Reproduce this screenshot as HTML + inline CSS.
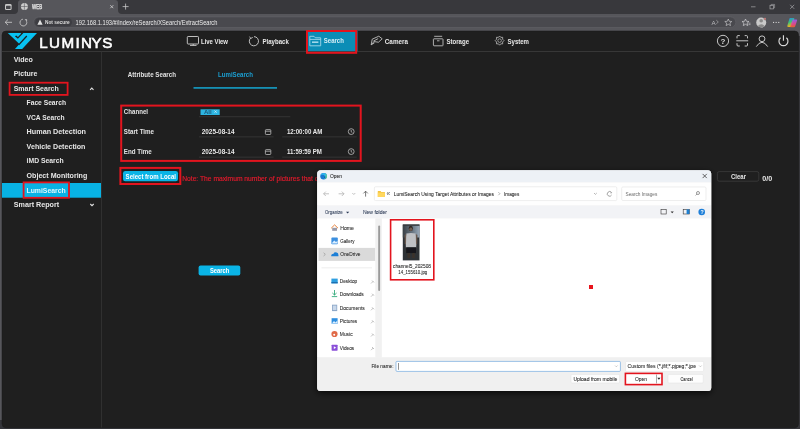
<!DOCTYPE html>
<html><head><meta charset="utf-8">
<style>
html,body{margin:0;padding:0;width:800px;height:429px;overflow:hidden;background:#56565b;}
svg{display:block;font-family:"Liberation Sans",sans-serif;}
.b{font-weight:bold;} svg{will-change:transform}
</style></head>
<body>
<svg width="800" height="429" viewBox="0 0 800 429">
<!-- ===== Browser chrome ===== -->
<rect x="0" y="0" width="800" height="429" fill="#56565b"/>
<rect x="0" y="0" width="800" height="14" fill="#38383c"/>
<!-- active tab -->
<path d="M14,14 Q18,14 18,10 L18,3 Q18,0 21,0 L115,0 Q118,0 118,3 L118,10 Q118,14 122,14 Z" fill="#56565b"/>
<!-- tab actions icon -->
<rect x="5" y="4" width="6.6" height="6" rx="1.3" fill="#c8c8c8"/>
<rect x="6" y="5.8" width="4.6" height="3.3" rx="0.6" fill="#45454a"/>
<!-- globe -->
<circle cx="24.4" cy="6.5" r="3.5" fill="#cdcdcd"/>
<path d="M24.4,3.2 V9.8 M21,6.5 H27.8" stroke="#5a5a5f" stroke-width="0.6"/>
<text x="32" y="8.7" font-size="6.3" fill="#eeeeee" stroke="#eeeeee" stroke-width="0.25" textLength="10.2" lengthAdjust="spacingAndGlyphs">WEB</text>
<!-- tab close -->
<path d="M110.3,5.2 L113.3,8.2 M113.3,5.2 L110.3,8.2" stroke="#d0d0d0" stroke-width="0.8"/>
<!-- new tab + -->
<path d="M125.6,3.6 V9.6 M122.6,6.6 H128.6" stroke="#c8c8c8" stroke-width="0.8"/>
<!-- window controls -->
<line x1="751" y1="6.8" x2="755.5" y2="6.8" stroke="#a8a8ab" stroke-width="0.7"/>
<rect x="770" y="5.3" width="3.6" height="3.6" fill="none" stroke="#a8a8ab" stroke-width="0.7"/>
<path d="M771.2,5.3 V4.4 H774.6 V7.8 H773.6" fill="none" stroke="#a8a8ab" stroke-width="0.6"/>
<path d="M790.2,4.8 L794.2,8.8 M794.2,4.8 L790.2,8.8" stroke="#a8a8ab" stroke-width="0.7"/>
<!-- back / reload -->
<path d="M12,22.3 H5.2 M8,19.5 L5.2,22.3 L8,25.1" fill="none" stroke="#cfcfcf" stroke-width="0.8"/>
<path d="M26.5,21.2 A3.4,3.4 0 1 1 22.9,19.2" fill="none" stroke="#cfcfcf" stroke-width="0.8"/>
<path d="M25.2,19.5 L26.7,19.5 L26.7,21 Z" fill="#cfcfcf" stroke="#cfcfcf" stroke-width="0.5"/>
<!-- address pill -->
<rect x="33.6" y="16.9" width="702.2" height="10.6" rx="5.3" fill="#49494e" stroke="#626267" stroke-width="0.6"/>
<rect x="35.2" y="18" width="36.8" height="8.6" rx="4.3" fill="#3d3d42"/>
<path d="M40,19.6 L42.6,24.8 L37.4,24.8 Z" fill="#e0e0e0"/>
<text x="45" y="24.3" font-size="5.6" class="b" fill="#dedede" textLength="24.7" lengthAdjust="spacingAndGlyphs">Not secure</text>
<text x="75.6" y="24.8" font-size="6.7" fill="#ececec" textLength="141.8" lengthAdjust="spacingAndGlyphs">192.168.1.193/#/index/reSearch/XSearch/ExtractSearch</text>
<!-- read aloud & star -->
<text x="711.5" y="25" font-size="6.2" fill="#b8b8bb">A</text>
<path d="M716.3,20.2 L718.3,22 L716.3,23.8" fill="none" stroke="#b8b8bb" stroke-width="0.6"/>
<path d="M728.3,19 L729.3,21.3 L731.8,21.5 L729.9,23.1 L730.5,25.6 L728.3,24.3 L726.1,25.6 L726.7,23.1 L724.8,21.5 L727.3,21.3 Z" fill="none" stroke="#c0c0c3" stroke-width="0.7"/>
<!-- favorites -->
<path d="M745.5,19 L746.5,21.3 L749,21.5 L747.1,23.1 L747.7,25.6 L745.5,24.3 L743.3,25.6 L743.9,23.1 L742,21.5 L744.5,21.3 Z" fill="none" stroke="#d0d0d3" stroke-width="0.7"/>
<path d="M748.5,23.2 H750.5 M748.5,24.6 H750.5" stroke="#d0d0d3" stroke-width="0.6"/>
<!-- profile -->
<circle cx="761.2" cy="22.5" r="5" fill="#c9c9c9"/>
<circle cx="761.2" cy="20.8" r="1.8" fill="#8a8a8a"/>
<path d="M757.6,26.2 Q761.2,22.3 764.8,26.2 Q761.2,28 757.6,26.2 Z" fill="#8a8a8a"/>
<circle cx="765" cy="18.9" r="1.1" fill="#ee8a86" stroke="#56565b" stroke-width="0.4"/>
<!-- dots -->
<rect x="773" y="21.9" width="1.1" height="1.1" fill="#d4d4d4"/><rect x="775.6" y="21.9" width="1.1" height="1.1" fill="#d4d4d4"/><rect x="778.2" y="21.9" width="1.1" height="1.1" fill="#d4d4d4"/>
<!-- copilot -->
<defs>
<linearGradient id="cpl" x1="0" y1="0" x2="0.3" y2="1"><stop offset="0" stop-color="#2f7ef2"/><stop offset="0.5" stop-color="#35c27a"/><stop offset="1" stop-color="#f6b21c"/></linearGradient>
<linearGradient id="cpr" x1="0" y1="0" x2="0" y2="1"><stop offset="0" stop-color="#8a62f2"/><stop offset="0.55" stop-color="#e2479a"/><stop offset="1" stop-color="#f2622a"/></linearGradient>
</defs>
<path d="M790.2,18 L793.6,18 Q794.6,18 794.3,19.2 L791.6,26 Q791.2,26.9 790.2,26.9 L788,26.9 Q787,26.9 787.3,25.8 L789.3,18.9 Q789.5,18 790.2,18 Z" fill="url(#cpl)"/>
<path d="M793.2,19.4 L796.3,19.4 Q797.4,19.4 797.1,20.5 L795.1,26.4 Q794.8,27.2 794,27.2 L790.8,27.2 Q789.9,27.2 790.3,26.2 L792.4,20.2 Q792.6,19.4 793.2,19.4 Z" fill="url(#cpr)" opacity="0.92"/>

<!-- ===== Page ===== -->
<rect x="0" y="420" width="800" height="9" fill="#34353a"/>
<rect x="796" y="36" width="4" height="393" fill="#37373b"/>
<rect x="2" y="31" width="796.6" height="396.7" rx="4" fill="#1f1f1f" stroke="#1a1a1a" stroke-width="0.5"/>
<!-- header border -->
<rect x="2" y="51" width="796.6" height="0.9" fill="#3a3a3a"/>
<!-- sidebar border -->
<rect x="101" y="51.5" width="0.9" height="376" fill="#333333"/>

<!-- logo -->
<path d="M7.8,33 L37,33 L22.2,49 L15,49 L19.4,44 Z" fill="#08c2f2"/>
<path d="M20.6,33 L23.4,33 L17.9,38.8 L14.9,36.2 L16.3,35.6 L17.9,37 L21.3,33.6 Z" fill="#1f1f1f"/>
<path d="M26.8,36 L18.7,44.9" fill="none" stroke="#1f1f1f" stroke-width="1.3"/>
<text x="39.2 49 61.4 75.6 80.9 91.6 102.2" y="47.7" font-size="15.2" fill="#ffffff" stroke="#ffffff" stroke-width="0.6">LUMINYS</text>

<!-- nav: Live View -->
<rect x="187.3" y="36.5" width="11.2" height="7.5" rx="0.8" fill="none" stroke="#d0d0d0" stroke-width="0.9"/>
<path d="M190,45.4 H196.5 M193.2,44 V45.4" stroke="#d0d0d0" stroke-width="0.9"/>
<text x="201" y="43.5" font-size="6.6" class="b" fill="#e8e8e8" textLength="27" lengthAdjust="spacingAndGlyphs">Live View</text>
<!-- Playback -->
<path d="M250.6,38 A4.6,4.6 0 1 0 254,36.6" fill="none" stroke="#d0d0d0" stroke-width="0.9"/>
<path d="M249.5,36.6 L250.8,38.4 L252.8,37.4" fill="none" stroke="#d0d0d0" stroke-width="0.8"/>
<text x="262.5" y="43.5" font-size="6.6" class="b" fill="#e8e8e8" textLength="26.3" lengthAdjust="spacingAndGlyphs">Playback</text>
<!-- Search (active) -->
<rect x="307" y="31" width="50.5" height="20.2" fill="#0b8db6"/>
<rect x="307" y="31" width="49.2" height="21.8" fill="none" stroke="#e3141e" stroke-width="2"/>
<path d="M309.8,45.8 V36.3 H314 L315.3,37.8 H320.7 V45.8 Z M309.8,39.4 H320.7" fill="none" stroke="#9fd7ea" stroke-width="0.9"/>
<rect x="312" y="41.4" width="6.4" height="1.6" fill="#9fd7ea"/>
<text x="323.8" y="43.4" font-size="6.6" class="b" fill="#d6eef6" textLength="20" lengthAdjust="spacingAndGlyphs">Search</text>
<!-- Camera -->
<path d="M371.2,44.8 L372.2,39.2 L378.8,36.2 L382.2,38.8 L378.5,42.2 L374,41.6 Z M373.3,41.2 L378.2,38.6 M374.5,42.8 L371.2,44.8" fill="none" stroke="#bdbdbd" stroke-width="0.9"/>
<text x="384.8" y="43.5" font-size="6.6" class="b" fill="#e8e8e8" textLength="23.2" lengthAdjust="spacingAndGlyphs">Camera</text>
<!-- Storage -->
<rect x="433.4" y="38.8" width="9.6" height="7" rx="0.6" fill="none" stroke="#bdbdbd" stroke-width="0.9"/>
<path d="M434.2,36.3 H442.2 M437,40.8 H439.5" stroke="#bdbdbd" stroke-width="0.9"/>
<text x="446.5" y="43.5" font-size="6.6" class="b" fill="#e8e8e8" textLength="22.5" lengthAdjust="spacingAndGlyphs">Storage</text>
<!-- System gear -->
<path d="M499.6,36 L500.8,37.4 L502.7,37.3 L502.6,39.2 L504,40.6 L502.6,42 L502.7,43.9 L500.8,43.8 L499.6,45.2 L498.4,43.8 L496.5,43.9 L496.6,42 L495.2,40.6 L496.6,39.2 L496.5,37.3 L498.4,37.4 Z" fill="none" stroke="#bdbdbd" stroke-width="0.8"/>
<circle cx="499.6" cy="40.6" r="1.8" fill="none" stroke="#bdbdbd" stroke-width="0.7"/>
<text x="507.5" y="43.5" font-size="6.6" class="b" fill="#e8e8e8" textLength="21.5" lengthAdjust="spacingAndGlyphs">System</text>
<!-- right icons -->
<circle cx="723" cy="40.9" r="5.6" fill="none" stroke="#d8d8d8" stroke-width="0.9"/>
<text x="720.4" y="43.8" font-size="8" class="b" fill="#d8d8d8">?</text>
<path d="M737,38.4 V36.6 Q737,35.6 738,35.6 H739.8 M744.7,35.6 H746.5 Q747.5,35.6 747.5,36.6 V38.4 M747.5,43.2 V45 Q747.5,46 746.5,46 H744.7 M739.8,46 H738 Q737,46 737,45 V43.2 M736.3,40.8 H748.2" fill="none" stroke="#d8d8d8" stroke-width="0.9"/>
<circle cx="762" cy="38.8" r="2.9" fill="none" stroke="#d8d8d8" stroke-width="0.9"/>
<path d="M756.3,46.6 Q759,42.3 762,42.3 Q765,42.3 767.7,46.6" fill="none" stroke="#d8d8d8" stroke-width="0.9"/>
<path d="M780.5,37.8 A4.5,4.5 0 1 0 786.4,37.8 M783.45,35.2 V40.8" fill="none" stroke="#dadada" stroke-width="1.15"/>

<!-- ===== sidebar ===== -->
<g class="b" fill="#e6e6e6" font-size="7.4">
<text x="13.7" y="61.5" textLength="19.2" lengthAdjust="spacingAndGlyphs">Video</text>
<text x="13.7" y="76.3" textLength="23.8" lengthAdjust="spacingAndGlyphs">Picture</text>
<text x="13.7" y="90.6" textLength="45.1" lengthAdjust="spacingAndGlyphs">Smart Search</text>
<text x="26.6" y="105.3" textLength="39.4" lengthAdjust="spacingAndGlyphs">Face Search</text>
<text x="26.6" y="119.8" textLength="38" lengthAdjust="spacingAndGlyphs">VCA Search</text>
<text x="26.6" y="134.2" textLength="59.4" lengthAdjust="spacingAndGlyphs">Human Detection</text>
<text x="26.6" y="148.8" textLength="58.8" lengthAdjust="spacingAndGlyphs">Vehicle Detection</text>
<text x="26.6" y="163.3" textLength="37" lengthAdjust="spacingAndGlyphs">iMD Search</text>
<text x="26.6" y="177.9" textLength="60.7" lengthAdjust="spacingAndGlyphs">Object Monitoring</text>
</g>
<rect x="9.6" y="82.7" width="58" height="12.2" fill="none" stroke="#e3141e" stroke-width="1.8"/>
<path d="M90.1,89.8 L91.8,88.1 L93.5,89.8" fill="none" stroke="#e0e0e0" stroke-width="1.1"/>
<rect x="2" y="183" width="99" height="14.7" fill="#08b2e4"/>
<rect x="23.6" y="182.4" width="45.4" height="15.4" fill="none" stroke="#e3141e" stroke-width="1.8"/>
<text x="26.5" y="192.5" font-size="7.4" class="b" fill="#dff6fd" textLength="39.2" lengthAdjust="spacingAndGlyphs">LumiSearch</text>
<text x="13.75" y="207" font-size="7.4" class="b" fill="#e6e6e6" textLength="45.4" lengthAdjust="spacingAndGlyphs">Smart Report</text>
<path d="M90.3,204 L92,205.7 L93.7,204" fill="none" stroke="#e0e0e0" stroke-width="1.1"/>

<!-- ===== content ===== -->
<text x="127.8" y="76.5" font-size="6.8" class="b" fill="#e0e0e0" textLength="48.2" lengthAdjust="spacingAndGlyphs">Attribute Search</text>
<text x="218" y="76.5" font-size="6.8" class="b" fill="#1b9fd2" textLength="35" lengthAdjust="spacingAndGlyphs">LumiSearch</text>
<rect x="193.5" y="87" width="83.5" height="1.8" fill="#1690b4"/>

<!-- form red box -->
<rect x="121.2" y="105.6" width="239.5" height="55.3" fill="none" stroke="#e3141e" stroke-width="2"/>
<g class="b" fill="#e4e4e4" font-size="6.9">
<text x="123.8" y="114" textLength="24.2" lengthAdjust="spacingAndGlyphs">Channel</text>
<text x="123.8" y="134.2" textLength="30.2" lengthAdjust="spacingAndGlyphs">Start Time</text>
<text x="123.8" y="154.2" textLength="27.8" lengthAdjust="spacingAndGlyphs">End Time</text>
</g>
<rect x="200.5" y="109.3" width="19.2" height="5.7" fill="#2db5e2"/>
<text x="203.9" y="114.3" font-size="5.8" class="b" fill="#1d5878" textLength="7.8" lengthAdjust="spacingAndGlyphs">All</text>
<path d="M214.4,110.4 L216.8,112.8 M216.8,110.4 L214.4,112.8" stroke="#e8f6fc" stroke-width="0.6"/>
<rect x="199" y="116.4" width="91.3" height="0.8" fill="#3a3a3a"/>
<g class="b" fill="#e8e8e8" font-size="6.6">
<text x="201.7" y="134" textLength="32.8" lengthAdjust="spacingAndGlyphs">2025-08-14</text>
<text x="201.7" y="154" textLength="32.8" lengthAdjust="spacingAndGlyphs">2025-08-14</text>
<text x="286.9" y="134" textLength="35.4" lengthAdjust="spacingAndGlyphs">12:00:00 AM</text>
<text x="286.9" y="154" textLength="35" lengthAdjust="spacingAndGlyphs">11:59:59 PM</text>
</g>
<g fill="none" stroke="#bdbdbd" stroke-width="0.8">
<rect x="265.4" y="129.6" width="5.4" height="4.9" rx="0.8"/>
<rect x="265.4" y="149.6" width="5.4" height="4.9" rx="0.8"/>
<circle cx="351.2" cy="131.6" r="2.9"/>
<circle cx="351.2" cy="151.6" r="2.9"/>
<path d="M351.2,130 V131.8 L352.3,132.5 M351.2,150 V151.8 L352.3,152.5"/>
</g>
<path d="M265.4,131.2 H270.8 M265.4,151.2 H270.8" stroke="#bdbdbd" stroke-width="0.8"/>
<g fill="#3a3a3a">
<rect x="199" y="136.5" width="74.6" height="0.8"/>
<rect x="282.2" y="136.5" width="74.5" height="0.8"/>
<rect x="199" y="156.7" width="74.6" height="0.8"/>
<rect x="282.2" y="156.7" width="74.5" height="0.8"/>
</g>

<!-- select from local -->
<rect x="120.4" y="167.9" width="59.9" height="16.1" fill="none" stroke="#e3141e" stroke-width="2"/>
<rect x="123" y="171" width="55" height="10.3" rx="2.2" fill="#0ab4e6"/>
<text x="125.6" y="178.6" font-size="6.9" class="b" fill="#ffffff" textLength="50.4" lengthAdjust="spacingAndGlyphs">Select from Local</text>
<text x="182.2" y="180.7" font-size="6.6" fill="#e01a2c" stroke="#e01a2c" stroke-width="0.18" textLength="136" lengthAdjust="spacingAndGlyphs">Note: The maximum number of pictures that c</text>

<!-- Search button -->
<rect x="198.6" y="265.5" width="41.7" height="10.1" rx="2" fill="#0ab4e6"/>
<text x="209.9" y="272.6" font-size="6.6" class="b" fill="#ffffff" textLength="19.5" lengthAdjust="spacingAndGlyphs">Search</text>

<!-- Clear & 0/0 -->
<rect x="717.4" y="171.6" width="41.4" height="9.6" rx="1.8" fill="none" stroke="#3c3c3c" stroke-width="0.8"/>
<text x="731" y="178.8" font-size="6.3" class="b" fill="#e6e6e6" textLength="15" lengthAdjust="spacingAndGlyphs">Clear</text>
<text x="762.3" y="180.6" font-size="6.3" class="b" fill="#e6e6e6" textLength="10" lengthAdjust="spacingAndGlyphs">0/0</text>


<!-- ===== Open dialog ===== -->
<defs>
<filter id="sh" x="-5%" y="-10%" width="110%" height="125%">
<feGaussianBlur in="SourceAlpha" stdDeviation="3.2"/>
<feOffset dy="1.5"/>
<feComponentTransfer><feFuncA type="linear" slope="0.75"/></feComponentTransfer>
<feMerge><feMergeNode/><feMergeNode in="SourceGraphic"/></feMerge>
</filter>
<clipPath id="dclip"><rect x="317.2" y="170.2" width="394" height="220.8" rx="3.5"/></clipPath>
</defs>
<rect x="317.2" y="170.2" width="394" height="220.8" rx="3.5" fill="#f0f0f0" filter="url(#sh)"/>
<g clip-path="url(#dclip)">
<!-- title bar -->
<rect x="317" y="170" width="395" height="12.4" fill="#edf1f6"/>
<!-- nav row -->
<rect x="317" y="182.4" width="395" height="23.2" fill="#fefefe"/>
<!-- command bar -->
<rect x="317" y="205.6" width="395" height="12.8" fill="#f2f3f6"/>
<!-- body -->
<rect x="317" y="218.4" width="395" height="139" fill="#ffffff"/>
<rect x="375.3" y="218.4" width="6.5" height="139" fill="#f1f1f1"/>
<rect x="378.2" y="225.5" width="1.9" height="65.5" rx="0.9" fill="#9a9a9a"/>
<!-- bottom -->
<rect x="317" y="357.4" width="395" height="34" fill="#f0f0f0"/>
</g>
<!-- edge icon -->
<circle cx="323.6" cy="176.2" r="3.3" fill="#1878d0"/>
<path d="M320.4,175.4 Q321.2,172.9 323.8,172.9 Q326.8,173 326.9,176 Q326.9,177.8 325.3,178.4 Q323.6,178.6 323.6,177.2 Q323.8,176.2 324.8,176 Q324,174.6 322.6,174.8 Q321.2,175 320.4,175.4 Z" fill="#2fb7ee"/>
<path d="M325.6,173.6 Q327.2,175.2 326.6,177.4 Q326,178.6 325,178.6 Q326.2,177.2 325.6,173.6 Z" fill="#6fd46a"/>
<circle cx="324.6" cy="177.1" r="0.9" fill="#0d5aa8"/>
<text stroke="#1a1a1a" stroke-width="0.07" x="330" y="178" font-size="5.95" fill="#1a1a1a" textLength="12" lengthAdjust="spacingAndGlyphs">Open</text>
<path d="M702.6,173.9 L706.8,178.1 M706.8,173.9 L702.6,178.1" stroke="#333" stroke-width="0.75"/>
<!-- nav arrows -->
<g fill="none" stroke="#a9a9a9" stroke-width="0.7">
<path d="M329,193.8 H323.6 M325.8,191.6 L323.6,193.8 L325.8,196"/>
<path d="M338.6,193.8 H344 M341.8,191.6 L344,193.8 L341.8,196"/>
<path d="M352.3,193 L353.8,194.5 L355.3,193"/>
</g>
<path d="M365.6,196.6 V191.2 M363.4,193.4 L365.6,191.2 L367.8,193.4" fill="none" stroke="#555" stroke-width="0.8"/>
<!-- address box -->
<rect x="374.4" y="186.8" width="242.4" height="13.8" rx="1.2" fill="#ffffff" stroke="#e3e3e3" stroke-width="0.6"/>
<path d="M377.8,191 H380.5 L381.3,192 H384.9 V197 H377.8 Z" fill="#f3c33f"/>
<rect x="377.8" y="192.6" width="7.1" height="4.4" fill="#ffd75e"/>
<text x="386.6" y="196.2" font-size="6.6" fill="#555">«</text>
<text stroke="#1c1c1c" stroke-width="0.07" x="393.7" y="195.9" font-size="6.15" fill="#1c1c1c" textLength="100.2" lengthAdjust="spacingAndGlyphs">LumiSearch Using Target Attributes or Images</text>
<path d="M498.4,192.2 L499.9,193.7 L498.4,195.2" fill="none" stroke="#777" stroke-width="0.6"/>
<text stroke="#1c1c1c" stroke-width="0.07" x="504" y="195.9" font-size="6.15" fill="#1c1c1c" textLength="15.2" lengthAdjust="spacingAndGlyphs">Images</text>
<path d="M594,193 L595.4,194.4 L596.8,193" fill="none" stroke="#888" stroke-width="0.6"/>
<path d="M611.3,192.4 A2.3,2.3 0 1 0 611.6,195" fill="none" stroke="#666" stroke-width="0.6"/>
<path d="M610.5,191.7 L611.6,192.5 L610.9,193.6" fill="none" stroke="#666" stroke-width="0.5"/>
<!-- search box -->
<rect x="621.7" y="187" width="84.3" height="13.5" rx="1.2" fill="#ffffff" stroke="#e3e3e3" stroke-width="0.6"/>
<text x="625.5" y="195.8" font-size="5.95" fill="#6b6b6b" textLength="31.8" lengthAdjust="spacingAndGlyphs">Search Images</text>
<circle cx="698" cy="193" r="1.5" fill="none" stroke="#555" stroke-width="0.6"/>
<path d="M696.9,194.1 L695.6,195.4" stroke="#555" stroke-width="0.6"/>
<!-- command bar -->
<text stroke="#2b3a55" stroke-width="0.07" x="325" y="214.1" font-size="6.05" fill="#2b3a55" textLength="17.6" lengthAdjust="spacingAndGlyphs">Organize</text>
<path d="M346,211.8 L349.2,211.8 L347.6,213.6 Z" fill="#2b3a55"/>
<text stroke="#2b3a55" stroke-width="0.07" x="362.9" y="214.1" font-size="6.05" fill="#2b3a55" textLength="24.1" lengthAdjust="spacingAndGlyphs">New folder</text>
<rect x="661" y="209.4" width="5.2" height="4.6" fill="none" stroke="#333" stroke-width="0.6"/>
<path d="M670.6,211.4 L673.8,211.4 L672.2,213.2 Z" fill="#333"/>
<rect x="683.2" y="209.4" width="6.2" height="4.6" fill="none" stroke="#333" stroke-width="0.6"/>
<rect x="686.6" y="209.4" width="2.8" height="4.6" fill="#1e7fd0"/>
<circle cx="701.7" cy="212" r="3.3" fill="#1e7fd8"/>
<text x="700.6" y="214.3" font-size="5.25" class="b" fill="#fff">?</text>
<!-- nav pane -->
<g fill="#1e1e1e" stroke="#1e1e1e" stroke-width="0.07" font-size="6.15">
<text x="340.2" y="229.7" textLength="13.7" lengthAdjust="spacingAndGlyphs">Home</text>
<text x="340.2" y="243" textLength="14.2" lengthAdjust="spacingAndGlyphs">Gallery</text>
</g>
<rect x="318.5" y="247.9" width="56.6" height="13" fill="#dadada"/>
<path d="M323.6,252.8 L325.3,254.4 L323.6,256" fill="none" stroke="#888" stroke-width="0.6"/>
<text stroke="#1e1e1e" stroke-width="0.07" x="340.2" y="256.4" font-size="6.15" fill="#1e1e1e" textLength="20.3" lengthAdjust="spacingAndGlyphs">OneDrive</text>
<rect x="321.5" y="267.6" width="50.5" height="0.6" fill="#e2e2e2"/>
<g fill="#1e1e1e" stroke="#1e1e1e" stroke-width="0.07" font-size="6.15">
<text x="339.8" y="283.1" textLength="17.4" lengthAdjust="spacingAndGlyphs">Desktop</text>
<text x="339.8" y="296.3" textLength="24" lengthAdjust="spacingAndGlyphs">Downloads</text>
<text x="339.8" y="309.9" textLength="25" lengthAdjust="spacingAndGlyphs">Documents</text>
<text x="339.8" y="322.9" textLength="17.5" lengthAdjust="spacingAndGlyphs">Pictures</text>
<text x="339.8" y="336.1" textLength="12.8" lengthAdjust="spacingAndGlyphs">Music</text>
<text x="339.8" y="349.8" textLength="14.4" lengthAdjust="spacingAndGlyphs">Videos</text>
</g>
<!-- nav icons -->
<path d="M331.2,228.2 L334.6,224.9 L338,228.2" fill="none" stroke="#e8823a" stroke-width="1"/>
<rect x="332.2" y="227.8" width="4.8" height="3" fill="#9a9aa8"/>
<rect x="331.4" y="237.6" width="6.4" height="6.6" rx="0.8" fill="#3b8fe0"/>
<path d="M332,243 L334.2,240.4 L336,242 L337.5,240.8 V243.6 H332 Z" fill="#dcefff"/>
<path d="M331.2,256.3 Q331,253.8 333.5,253.7 Q334.5,251.6 336.6,252.6 Q338.8,252.8 338.4,256.3 Z" fill="#1d7fd6"/>
<rect x="331.4" y="278.6" width="6.3" height="4.8" fill="#2f9fe0"/>
<rect x="331.4" y="282" width="6.3" height="1.3" fill="#1f6fb0"/>
<path d="M334.5,290 V295 M332.4,293 L334.5,295 L336.6,293 M331.8,296.6 H337.2" fill="none" stroke="#19a06b" stroke-width="0.8"/>
<rect x="332" y="304.7" width="5.2" height="6.4" fill="#8ea8c8"/>
<rect x="332.8" y="305.6" width="3.6" height="4.4" fill="#c9d8ea"/>
<rect x="331.6" y="318.2" width="6" height="5.6" fill="#2f8fe0"/>
<path d="M331.8,323.6 L334,321 L335.5,322.4 L337.4,320.6 V323.6 Z" fill="#dff0ff"/>
<circle cx="334.5" cy="334" r="3.1" fill="#e06a48"/>
<circle cx="334.2" cy="334.8" r="1" fill="#fff"/>
<rect x="331.6" y="344.7" width="6" height="6" rx="0.6" fill="#8a4fd8"/>
<path d="M333.8,346.3 L336.2,347.7 L333.8,349.1 Z" fill="#fff"/>
<g fill="none" stroke="#9a9a9a" stroke-width="0.6">
<path d="M371,283.5 L373.2,281.3 M372,280.5 L374,282.5"/>
<path d="M371,296.7 L373.2,294.5 M372,293.7 L374,295.7"/>
<path d="M371,310.3 L373.2,308.1 M372,307.3 L374,309.3"/>
<path d="M371,323.3 L373.2,321.1 M372,320.3 L374,322.3"/>
<path d="M371,336.5 L373.2,334.3 M372,333.5 L374,335.5"/>
<path d="M371,350.2 L373.2,348 M372,347 L374,349"/>
</g>
<!-- thumbnail -->
<rect x="390.6" y="219.8" width="43.2" height="60" fill="none" stroke="#e3141e" stroke-width="1.6"/>
<defs><linearGradient id="ph" x1="0" y1="0" x2="0" y2="1">
<stop offset="0" stop-color="#6a7c8c"/><stop offset="0.25" stop-color="#8a98a6"/>
<stop offset="0.45" stop-color="#d8d8d8"/><stop offset="0.62" stop-color="#c8c8c8"/>
<stop offset="0.68" stop-color="#2a2a2c"/><stop offset="1" stop-color="#3a3e44"/></linearGradient></defs>
<defs><filter id="tb" x="-5%" y="-5%" width="110%" height="110%"><feGaussianBlur stdDeviation="0.45"/></filter></defs><g filter="url(#tb)"><defs><linearGradient id="bgt" x1="0" y1="0" x2="1" y2="0"><stop offset="0" stop-color="#3a4046"/><stop offset="0.6" stop-color="#6a7884"/><stop offset="1" stop-color="#98a8b8"/></linearGradient></defs>
<rect x="402.8" y="224.5" width="16.7" height="35.9" fill="#2f3135"/>
<rect x="402.8" y="225.5" width="16.7" height="12" fill="url(#bgt)"/>
<rect x="402.8" y="224.5" width="16.7" height="1.2" fill="#3a3c40"/>
<ellipse cx="410.8" cy="228.4" rx="2.1" ry="2.6" fill="#2e2622"/>
<ellipse cx="410.8" cy="229.2" rx="1.6" ry="1.7" fill="#6e5c50"/>
<path d="M406.4,233.6 Q411,232.2 415.6,233.6 L416.6,240 L416.2,247.5 L405.9,247.5 L405.6,240 Z" fill="#bfc1c4"/>
<path d="M404.6,235 L406.2,234 L406,244 L404.8,244 Z M415.8,234 L417.4,235 L417.2,244 L416,244 Z" fill="#6a5a50"/>
<rect x="406.2" y="247.3" width="9.8" height="5.8" fill="#18181a"/>
<rect x="407.4" y="253" width="2.6" height="5" fill="#3a322c"/>
<rect x="412.2" y="253" width="2.6" height="5" fill="#3a322c"/>
</g>
<text stroke="#1e1e1e" stroke-width="0.07" x="393" y="268" font-size="5.65" fill="#1e1e1e" textLength="38" lengthAdjust="spacingAndGlyphs">channel5_202508</text>
<text stroke="#1e1e1e" stroke-width="0.07" x="398.3" y="273.8" font-size="5.65" fill="#1e1e1e" textLength="29" lengthAdjust="spacingAndGlyphs">14_155610.jpg</text>
<!-- red dot -->
<rect x="589" y="285" width="4" height="4" fill="#e8141c"/>
<!-- bottom controls -->
<text stroke="#1e1e1e" stroke-width="0.07" x="371.4" y="367.8" font-size="5.85" fill="#1e1e1e" textLength="22.2" lengthAdjust="spacingAndGlyphs">File name:</text>
<rect x="396" y="361.4" width="224.4" height="10" rx="1" fill="#ffffff" stroke="#5a9ad8" stroke-width="0.6"/>
<rect x="398.2" y="363" width="0.5" height="6.8" fill="#222"/>
<path d="M615,365.5 L616.3,366.8 L617.6,365.5" fill="none" stroke="#999" stroke-width="0.5"/>
<rect x="625.6" y="361.4" width="78" height="10" rx="1" fill="#ffffff" stroke="#e0e0e0" stroke-width="0.5"/>
<text stroke="#1e1e1e" stroke-width="0.07" x="627.6" y="368" font-size="5.75" fill="#1e1e1e" textLength="68.4" lengthAdjust="spacingAndGlyphs">Custom files (*.jfif;*.pjpeg;*.jpe</text>
<path d="M699.1,365.5 L700.4,366.8 L701.7,365.5" fill="none" stroke="#999" stroke-width="0.5"/>
<rect x="571" y="374.4" width="48.6" height="8.6" rx="1" fill="#fdfdfd" stroke="#e0e0e0" stroke-width="0.5"/>
<text stroke="#1e1e1e" stroke-width="0.07" x="573.4" y="380.7" font-size="5.75" fill="#1e1e1e" textLength="44" lengthAdjust="spacingAndGlyphs">Upload from mobile</text>
<rect x="625.4" y="373.4" width="36.6" height="11.2" fill="#ffffff" stroke="#e3141e" stroke-width="1.6"/>
<text stroke="#1e1e1e" stroke-width="0.07" x="635" y="380.8" font-size="5.75" fill="#1e1e1e" textLength="12" lengthAdjust="spacingAndGlyphs">Open</text>
<rect x="656.2" y="374.6" width="0.5" height="8.8" fill="#555"/>
<path d="M657.3,377.8 L660.5,377.8 L658.9,379.8 Z" fill="#222"/>
<rect x="668" y="374.4" width="35.2" height="8.6" rx="1" fill="#fdfdfd" stroke="#e0e0e0" stroke-width="0.5"/>
<text stroke="#1e1e1e" stroke-width="0.07" x="680.5" y="380.7" font-size="5.75" fill="#1e1e1e" textLength="12.2" lengthAdjust="spacingAndGlyphs">Cancel</text>

</svg>
</body></html>
